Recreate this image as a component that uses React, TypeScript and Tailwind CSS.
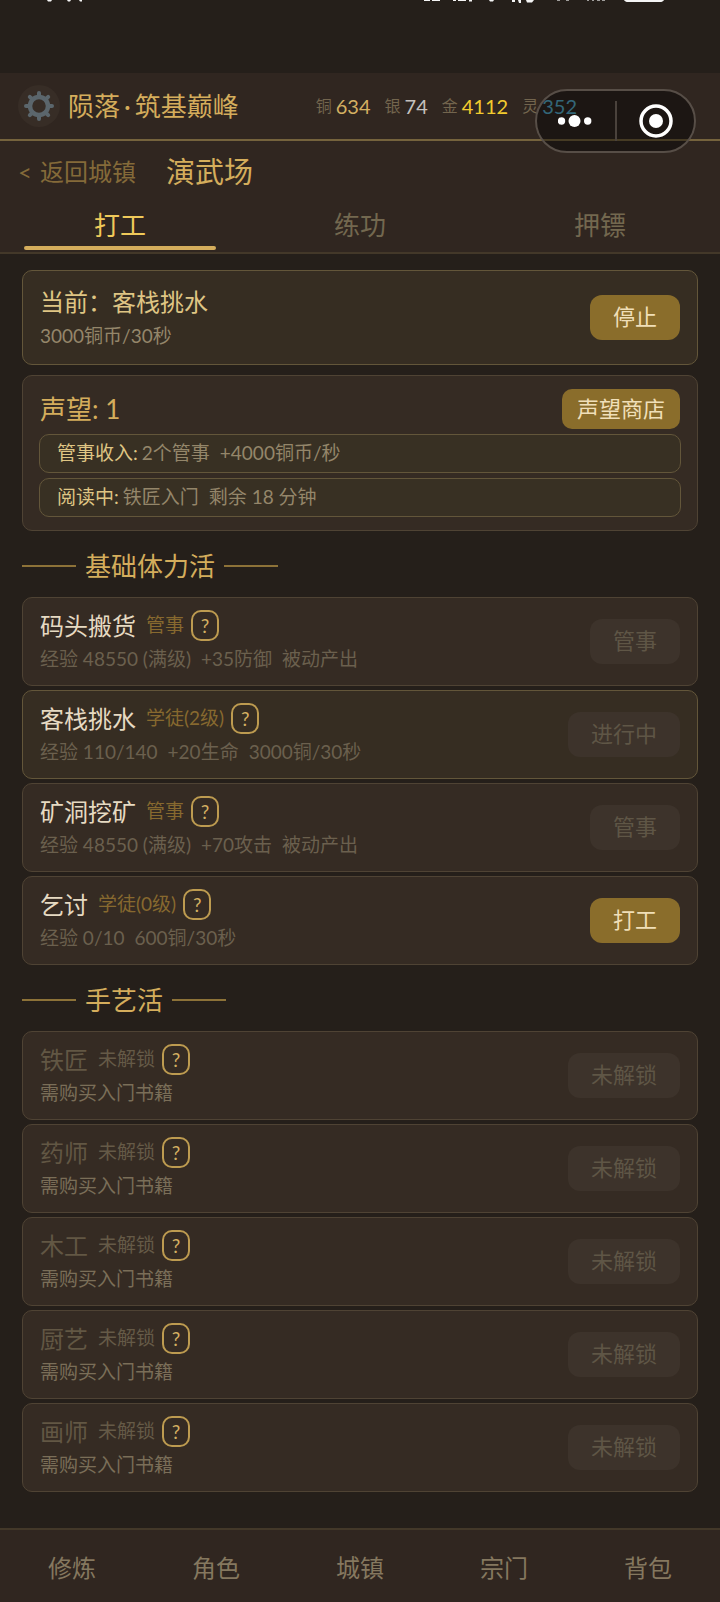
import React from 'react'

type Job = {
  name: string
  rank: string
  details: string[]
  action: string
  state: 'idle' | 'active' | 'managed' | 'locked'
}

const coins = [
  { label: '铜', value: '634', color: 'text-[#d4b062]' },
  { label: '银', value: '74', color: 'text-[#c4c1be]' },
  { label: '金', value: '4112', color: 'text-[#f2cb2e]' },
  { label: '灵', value: '352', color: 'text-[#55abc8]' },
]

const tabs = ['打工', '练功', '押镖']

const laborJobs: Job[] = [
  { name: '码头搬货', rank: '管事', details: ['经验 48550 (满级)', '+35防御', '被动产出'], action: '管事', state: 'managed' },
  { name: '客栈挑水', rank: '学徒(2级)', details: ['经验 110/140', '+20生命', '3000铜/30秒'], action: '进行中', state: 'active' },
  { name: '矿洞挖矿', rank: '管事', details: ['经验 48550 (满级)', '+70攻击', '被动产出'], action: '管事', state: 'managed' },
  { name: '乞讨', rank: '学徒(0级)', details: ['经验 0/10', '600铜/30秒'], action: '打工', state: 'idle' },
]

const craftJobs: Job[] = ['铁匠', '药师', '木工', '厨艺', '画师'].map((name) => ({
  name,
  rank: '未解锁',
  details: ['需购买入门书籍'],
  action: '未解锁',
  state: 'locked',
}))

const navItems = ['修炼', '角色', '城镇', '宗门', '背包']

function StatusBar() {
  return (
    <div className="h-[73px] overflow-hidden">
      <svg className="h-1 w-full" viewBox="0 0 720 4" preserveAspectRatio="xMinYMin" fill="#f4f4f4" aria-hidden="true">
        <path d="M47 0h5l-1 1.500h-3zM67 0h4l-1 1.500h-2zM79 0h3v1.500h-2z" />
        <path d="M424 0h6v1h-6zM432 0h8v1h-8zM453 0h3v1h-3zM458 0h8v1h-8zM469 0h3v1.500h-3zM489 0h5l-1 1.500h-3zM512 0h3v2h-3zM518 0h3v3h-2zM526 0h8l-2 2.500h-5z" />
        <path d="M624 0h40c-1 1.500-2 2-4 2h-32c-2 0-3-.5-4-2z" />
        <path opacity=".6" d="M557 0h3v1h-3zM566 0h3v1h-3zM587 0h2v1h-2zM592 0h2v1h-2zM597 0h3v1h-3zM602 0h3v1h-3z" />
      </svg>
    </div>
  )
}

function GearIcon() {
  return (
    <svg className="h-8 w-8" viewBox="-16 -16 32 32" fill="none" stroke="#5b666c" aria-hidden="true">
      <circle r="9" strokeWidth="4.500" />
      {[0, 45, 90, 135, 180, 225, 270, 315].map((angle) => (
        <path key={angle} d="M0-10V-13" strokeWidth="4" strokeLinecap="round" transform={`rotate(${angle})`} />
      ))}
    </svg>
  )
}

function Capsule() {
  return (
    <div className="absolute top-[89px] right-6 flex h-16 w-[161px] items-center rounded-full border-2 border-[#574e47] bg-black/40">
      <button aria-label="更多" className="flex h-full flex-1 items-center justify-center">
        <svg className="h-3 w-9" viewBox="0 0 36 12" fill="#fff" aria-hidden="true">
          <circle cx="3.500" cy="6" r="3.700" />
          <circle cx="16.500" cy="6" r="6" />
          <circle cx="29.700" cy="6" r="3.700" />
        </svg>
      </button>
      <span className="h-10 w-0.5 bg-[#4a423c]" />
      <button aria-label="关闭" className="flex h-full flex-1 items-center justify-center">
        <svg className="h-9 w-9" viewBox="0 0 36 36" aria-hidden="true">
          <circle cx="19" cy="18" r="15" fill="none" stroke="#fff" strokeWidth="3.500" />
          <circle cx="19" cy="18" r="7" fill="#fff" />
        </svg>
      </button>
    </div>
  )
}

function SectionTitle({ children }: { children: React.ReactNode }) {
  return (
    <h2 className="mt-4 mb-3 flex h-[38px] items-center gap-[9px] text-[26px] text-[#d4ad5c]">
      <span className="h-0.5 w-[54px] bg-[#8d7238]" />
      {children}
      <span className="h-0.5 w-[54px] bg-[#8d7238]" />
    </h2>
  )
}

function ActionButton({ children, disabled }: { children: React.ReactNode; disabled?: boolean }) {
  return (
    <button
      disabled={disabled}
      className="h-[45px] shrink-0 rounded-xl bg-[#8a6d2b] px-[23px] pb-0.5 text-[22px] text-[#f0dfb8] disabled:bg-[#3d332b] disabled:text-[#5f5646]"
    >
      {children}
    </button>
  )
}

function JobCard({ job }: { job: Job }) {
  const active = job.state === 'active'
  const locked = job.state === 'locked'

  return (
    <li
      className={`flex h-[89px] items-center justify-between rounded-[10px] border px-[17px] ${
        active ? 'border-[#63563a] bg-[#362d22]' : 'border-[#4f4334] bg-[#352b23]'
      }`}
    >
      <div>
        <div className="flex h-8 items-center">
          <h3 className={`text-2xl ${locked ? 'text-[#625744]' : 'text-[#e6dac2]'}`}>{job.name}</h3>
          <span className={`ml-[10px] text-[19px] ${locked ? 'text-[#655a47]' : 'text-[#87692f]'}`}>{job.rank}</span>
          <button
            aria-label={`${job.name}说明`}
            className="ml-[7px] h-[31px] w-7 rounded-[10px] border-2 border-[#bd9b50] text-[19px] leading-[26px] text-[#d4b062]"
          >
            ?
          </button>
        </div>
        <p className={`mt-1 flex h-7 items-center gap-[10px] text-[19px] ${locked ? 'text-[#7a6e58]' : 'text-[#6b604e]'}`}>
          {job.details.map((detail) => (
            <span key={detail}>{detail}</span>
          ))}
        </p>
      </div>
      <ActionButton disabled={job.state !== 'idle'}>{job.action}</ActionButton>
    </li>
  )
}

function JobList({ jobs }: { jobs: Job[] }) {
  return (
    <ul className="grid gap-1">
      {jobs.map((job) => (
        <JobCard key={job.name} job={job} />
      ))}
    </ul>
  )
}

export default function App() {
  return (
    <div className="relative flex min-h-screen flex-col bg-[#251f1a] font-[Lato,'Noto_Sans_CJK_SC',sans-serif]">
      <StatusBar />

      <header className="flex h-[68px] items-center border-b-2 border-[#75633d] bg-[#302620] pl-[18px] pr-[143px]">
        <button aria-label="设置" className="flex h-[42px] w-[42px] items-center justify-center rounded-full bg-[#372d26]">
          <GearIcon />
        </button>
        <h1 className="ml-2 text-[26px] whitespace-nowrap text-[#d4ad5c]">
          陨落<span className="mx-1">·</span>筑基巅峰
        </h1>
        <dl className="ml-auto flex items-center gap-[14px]">
          {coins.map((coin) => (
            <div key={coin.label} className="flex items-center gap-1">
              <dt className="text-base text-[#73654e]">{coin.label}</dt>
              <dd className={`text-[20px] ${coin.color}`}>{coin.value}</dd>
            </div>
          ))}
        </dl>
      </header>

      <div className="border-b-2 border-[#433829] bg-[#302620]">
        <div className="flex h-[62px] items-center gap-[30px] px-[18px]">
          <a href="#town" className="flex gap-2 text-2xl text-[#846a39]">
            <span>&lt;</span>
            <span>返回城镇</span>
          </a>
          <h2 className="text-[29px] text-[#d4ad5c]">演武场</h2>
        </div>
        <div role="tablist" className="grid grid-cols-3">
          {tabs.map((tab, i) => (
            <button
              key={tab}
              role="tab"
              aria-selected={i === 0}
              className="flex h-[49px] flex-col items-center justify-between py-0.5 text-[26px] leading-[41px] text-[#73684f] aria-selected:text-[#efc95a]"
            >
              {tab}
              {i === 0 && <span className="h-1 w-4/5 shrink-0 rounded-full bg-[#d4ad5c]" />}
            </button>
          ))}
        </div>
      </div>

      <main className="flex-1 px-[22px] pt-4 pb-9">
        <section className="flex h-[95px] items-center justify-between rounded-[10px] border border-[#63563a] bg-[#362d22] px-[17px]">
          <div>
            <h2 className="text-2xl leading-9 text-[#dfc584]">当前：客栈挑水</h2>
            <p className="text-[19px] leading-8 text-[#94866a]">3000铜币/30秒</p>
          </div>
          <ActionButton>停止</ActionButton>
        </section>

        <section className="mt-[10px] grid gap-[5px] rounded-[10px] border border-[#4f4334] bg-[#352b23] px-4 py-[13px]">
          <div className="flex h-10 items-center justify-between px-px">
            <h2 className="text-[26px] text-[#d4ad5c]">声望: 1</h2>
            <button className="h-10 rounded-[10px] bg-[#8a6d2b] px-[15px] pb-0.5 text-[22px] text-[#f0dfb8]">声望商店</button>
          </div>
          <p className="flex h-[39px] items-center rounded-[10px] border border-[#63563a] bg-[#383023] px-[17px] text-[19px] text-[#94866a]">
            <span className="mr-1 text-[#dfc584]">管事收入:</span>
            <span className="mr-[10px]">2个管事</span>
            <span>+4000铜币/秒</span>
          </p>
          <p className="flex h-[39px] items-center rounded-[10px] border border-[#63563a] bg-[#383023] px-[17px] text-[19px] text-[#94866a]">
            <span className="mr-1 text-[#dfc584]">阅读中:</span>
            <span className="mr-[10px]">铁匠入门</span>
            <span>剩余 18 分钟</span>
          </p>
        </section>

        <SectionTitle>基础体力活</SectionTitle>
        <JobList jobs={laborJobs} />

        <SectionTitle>手艺活</SectionTitle>
        <JobList jobs={craftJobs} />
      </main>

      <nav className="grid h-[74px] grid-cols-5 border-t-2 border-[#433829] bg-[#302620]">
        {navItems.map((item) => (
          <button key={item} className="pt-1 text-2xl text-[#85785f]">
            {item}
          </button>
        ))}
      </nav>

      <Capsule />
    </div>
  )
}
